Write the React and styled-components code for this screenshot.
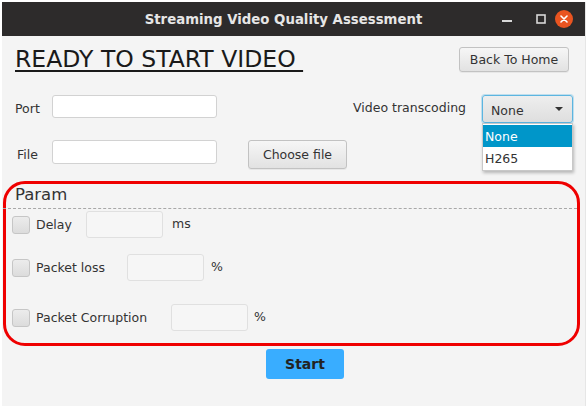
import React from "react";
import styled, { createGlobalStyle } from "styled-components";

const Global = createGlobalStyle`
  html, body { margin: 0; padding: 0; background: #ffffff; }
  body { font-family: "DejaVu Sans", "Noto Sans", sans-serif; }
  * { box-sizing: border-box; }
`;

const Frame = styled.div`
  width: 584px;
  height: 404px;
  margin: 2px 0 0 2px;
  display: flex;
  flex-direction: column;
  background: #f4f4f4;
  border-right: 1px solid #e6e6e6;
`;

const TitleBar = styled.div`
  height: 34px;
  background: #2d2b2b;
  display: flex;
  align-items: center;
  position: relative;
  flex-shrink: 0;
`;

const Title = styled.div`
  flex: 1;
  text-align: center;
  color: #e6e6e6;
  font-family: "DejaVu Sans", sans-serif;
  font-weight: bold;
  font-size: 13.3px;
  padding-right: 20px;
`;

const WinControls = styled.div`
  position: absolute;
  right: 12px;
  top: 0;
  height: 34px;
  display: flex;
  align-items: center;
`;

const WinBtn = styled.div`
  width: ${(p) => p.$w}px;
  height: 34px;
  display: flex;
  align-items: center;
  justify-content: ${(p) => p.$justify || "center"};
`;

const CloseCircle = styled.div`
  width: 18px;
  height: 18px;
  border-radius: 50%;
  background: #e95420;
  display: flex;
  align-items: center;
  justify-content: center;
`;

const Body = styled.div`
  flex: 1;
  display: flex;
  flex-direction: column;
`;

const HeaderRow = styled.div`
  display: flex;
  justify-content: space-between;
  align-items: flex-start;
  padding: 9px 16px 0 13px;
  height: 59px;
`;

const Heading = styled.h1`
  margin: 0;
  font-family: "DejaVu Sans", sans-serif;
  font-weight: normal;
  font-size: 23.5px;
  color: #1a1a1a;
  text-decoration: underline;
  text-decoration-thickness: 2px;
  text-underline-offset: 3px;
  white-space: pre;
  line-height: 28px;
`;

const Button = styled.button`
  font-family: "DejaVu Sans", sans-serif;
  font-size: 12.5px;
  color: #333;
  height: ${(p) => p.$h || 25}px;
  width: ${(p) => p.$w}px;
  padding: 0;
  border: 1px solid #c2c2c2;
  border-radius: 3px;
  background: linear-gradient(#f6f6f6, #e2e2e2);
  box-shadow: 0 1px 0 rgba(0, 0, 0, 0.05);
  margin-top: ${(p) => p.$mt || 0}px;
  align-self: start;
`;

const Form = styled.div`
  display: grid;
  grid-template-columns: 37px 165px 31px 98px 1fr;
  grid-template-rows: 27px 28px;
  row-gap: 18px;
  padding-left: 13px;
  align-items: center;
`;

const Label = styled.span`
  font-size: 12.5px;
  color: #333;
  padding-left: ${(p) => p.$pl || 0}px;
  margin-top: ${(p) => p.$mt || 0}px;
`;

const TextInput = styled.div`
  height: ${(p) => p.$h || 23}px;
  width: 165px;
  background: #ffffff;
  border: 1px solid #d2d2d2;
  border-radius: 3px;
  align-self: start;
`;

const ComboWrap = styled.div`
  display: flex;
  align-items: center;
  justify-content: flex-end;
  padding-right: 12px;
  gap: 16px;
  align-self: start;
  position: relative;
`;

const Combo = styled.div`
  width: 91px;
  height: 28px;
  border: 1px solid #5cb5e0;
  border-radius: 3px;
  background: linear-gradient(#eeeeee, #dedede);
  box-shadow: 0 0 0 1px rgba(92, 181, 224, 0.35);
  display: flex;
  align-items: center;
  justify-content: space-between;
  padding: 2px 9px 0 8px;
  font-size: 12.5px;
  color: #333;
`;

const Caret = styled.span`
  width: 0;
  height: 0;
  border-left: 4px solid transparent;
  border-right: 4px solid transparent;
  border-top: 4px solid #333;
  margin-top: -2px;
`;

const DropList = styled.div`
  position: absolute;
  top: 28px;
  right: 12px;
  width: 91px;
  background: #ffffff;
  border: 1px solid #c8c8c8;
  box-shadow: 1px 2px 3px rgba(0, 0, 0, 0.25);
  z-index: 2;
  padding: 1px 0;
`;

const DropItem = styled.div`
  height: 22px;
  display: flex;
  align-items: center;
  padding-left: 2px;
  font-size: 12.5px;
  color: ${(p) => (p.$selected ? "#ffffff" : "#333")};
  background: ${(p) => (p.$selected ? "#0096c9" : "transparent")};
`;

const ParamBox = styled.section`
  margin: 13px 0 0 1px;
  width: 577px;
  height: 165px;
  border: 3px solid #ef0000;
  border-radius: 22px;
  display: flex;
  flex-direction: column;
`;

const ParamTitle = styled.div`
  font-size: 16.5px;
  color: #333;
  padding: 1px 0 0 9px;
  height: 24px;
`;

const Dashed = styled.div`
  border-top: 1px dashed #a8a8a8;
  margin-left: -3px;
`;

const ParamRow = styled.div`
  display: flex;
  align-items: center;
  padding-left: 6px;
  height: 27px;
  margin-top: ${(p) => p.$mt}px;
`;

const Check = styled.span`
  width: 18px;
  height: 18px;
  border: 1px solid #c6c6c6;
  border-radius: 3px;
  background: linear-gradient(#ececec, #dcdcdc);
  flex-shrink: 0;
`;

const ParamLabel = styled.span`
  font-size: 12.5px;
  color: #333;
  margin-left: 6px;
  width: ${(p) => p.$w}px;
  flex-shrink: 0;
`;

const ParamInput = styled.div`
  width: 77px;
  height: 27px;
  border: 1px solid #e0e0e0;
  border-radius: 3px;
  background: #f6f6f6;
  flex-shrink: 0;
`;

const Unit = styled.span`
  font-size: 12.5px;
  color: #333;
  margin-left: ${(p) => p.$ml}px;
  margin-top: ${(p) => p.$mt || 0}px;
`;

const StartRow = styled.div`
  padding: 3px 0 0 264px;
`;

const StartButton = styled.button`
  width: 78px;
  height: 30px;
  border: none;
  border-radius: 3px;
  background: #39adff;
  font-family: "DejaVu Sans", sans-serif;
  font-weight: bold;
  font-size: 14px;
  color: #222;
  padding: 0;
`;

const params = [
  { label: "Delay", lw: 50, unit: "ms", uml: 9, mt: 2, umt: -2 },
  { label: "Packet loss", lw: 91, unit: "%", uml: 7, mt: 16, umt: -3 },
  { label: "Packet Corruption", lw: 135, unit: "%", uml: 6, mt: 23, umt: -3 },
];

export default function App() {
  return (
    <>
      <Global />
      <Frame>
        <TitleBar>
          <Title>Streaming Video Quality Assessment</Title>
          <WinControls>
            <WinBtn $w={40}>
              <svg width="10" height="10" viewBox="0 0 10 10">
                <rect x="0" y="6" width="10" height="2" fill="#d8d8d8" />
              </svg>
            </WinBtn>
            <WinBtn $w={28}>
              <svg width="10" height="10" viewBox="0 0 10 10">
                <rect x="1" y="1" width="8" height="8" fill="none" stroke="#d8d8d8" strokeWidth="1.6" />
              </svg>
            </WinBtn>
            <WinBtn $w={18}>
              <CloseCircle>
                <svg width="8" height="8" viewBox="0 0 8 8">
                  <path d="M1 1 L7 7 M7 1 L1 7" stroke="#ffffff" strokeWidth="1.6" strokeLinecap="round" />
                </svg>
              </CloseCircle>
            </WinBtn>
          </WinControls>
        </TitleBar>
        <Body>
          <HeaderRow>
            <Heading>{"READY TO START VIDEO "}</Heading>
            <Button $w={110} $h={25} $mt={2}>Back To Home</Button>
          </HeaderRow>
          <Form>
            <Label>Port</Label>
            <TextInput />
            <span />
            <span />
            <ComboWrap>
              <Label $mt={-3}>Video transcoding</Label>
              <Combo>
                <span>None</span>
                <Caret />
              </Combo>
              <DropList>
                <DropItem $selected>None</DropItem>
                <DropItem>H265</DropItem>
              </DropList>
            </ComboWrap>
            <Label $pl={2}>File</Label>
            <TextInput $h={24} />
            <span />
            <Button $w={99} $h={29}>Choose file</Button>
            <span />
          </Form>
          <ParamBox>
            <ParamTitle>Param</ParamTitle>
            <Dashed />
            {params.map((p) => (
              <ParamRow key={p.label} $mt={p.mt}>
                <Check />
                <ParamLabel $w={p.lw}>{p.label}</ParamLabel>
                <ParamInput />
                <Unit $ml={p.uml} $mt={p.umt}>{p.unit}</Unit>
              </ParamRow>
            ))}
          </ParamBox>
          <StartRow>
            <StartButton>Start</StartButton>
          </StartRow>
        </Body>
      </Frame>
    </>
  );
}
